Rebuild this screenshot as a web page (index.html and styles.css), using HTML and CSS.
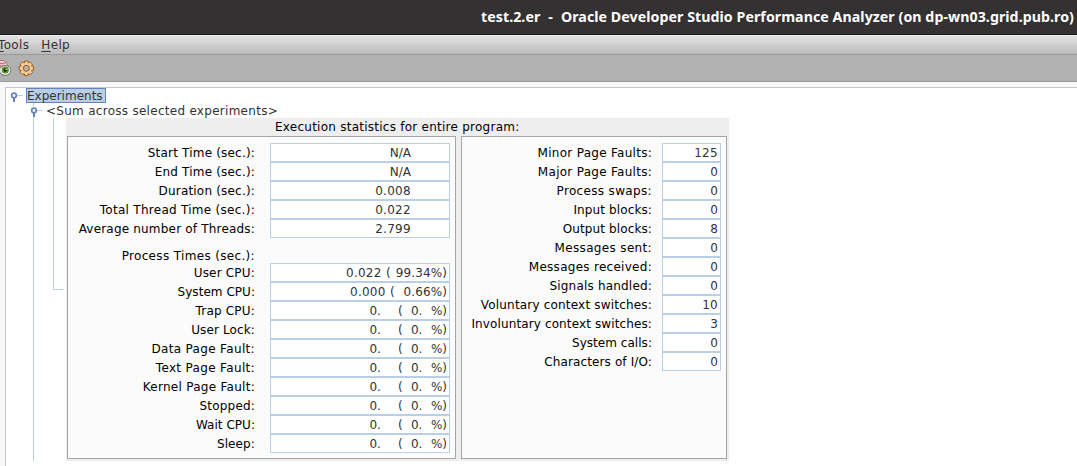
FILE: index.html
```html
<!DOCTYPE html>
<html lang="en">
<head>
<meta charset="utf-8">
<title>test.2.er - Oracle Developer Studio Performance Analyzer</title>
<link rel="stylesheet" href="styles.css">
</head>
<body>
<header class="titlebar"><span class="t1">test.2.er</span><span class="t2">-</span><span class="t3">Oracle Developer Studio Performance Analyzer (on dp-wn03.grid.pub.ro)</span></header>
<nav class="menubar"><span class="m1"><u>T</u>ools</span><span><u>H</u>elp</span></nav>
<div class="toolbar">
<svg class="eye" width="12" height="18" viewBox="0 0 12 18"><path d="M-2 .500h5.500l3.500 3.500v7h-9z" fill="#f5dcde" stroke="#b0666c"/><path d="M0 3.500h5M0 6h6" stroke="#dc6a72" stroke-width="1.300"/><ellipse cx="5.200" cy="10.500" rx="5.700" ry="4.900" fill="#eef1ea" stroke="#68736a"/><circle cx="5.300" cy="10" r="3.600" fill="#5c9422"/><circle cx="5.300" cy="10" r="1.800" fill="#172509"/><circle cx="6.200" cy="9.200" r=".8" fill="#fff"/></svg>
<svg class="gear" width="17" height="17" viewBox="0 0 17 17"><path d="M6.800 1h3l.6 2 1.900-1 2.200 2.200-1 1.900 2 .6v3.200l-2 .6 1 1.900-2.200 2.200-1.900-1-.6 2h-3l-.6-2-1.900 1L2.100 12.400l1-1.900-2-.6V6.700l2-.6-1-1.900L4.300 2l1.900 1z" fill="#f4cd98" stroke="#9c5a1c" stroke-linejoin="round"/><circle cx="8.300" cy="8.300" r="3" fill="#b4b2b0" stroke="#9a551a"/></svg>
</div>
<main class="content">
<svg class="tree" width="62" height="373" viewBox="0 0 62 373"><g fill="none" stroke="#b8cfe5"><path d="M11 7.500h6M31 22.500h6M27.500 15v3M27.500 29v344M47.500 30v171.500h9.500"/></g><g fill="#fff" stroke="#6382bf" stroke-width="1.700"><path d="M8 10v4M28 25v4" stroke-width="2"/><circle cx="8" cy="7.500" r="2.300"/><circle cx="28" cy="22.500" r="2.300"/></g></svg>
<div class="node root"><span>Experiments</span></div>
<div class="node sum"><span>&lt;Sum across selected experiments&gt;</span></div>
<section class="stats">
<h1>Execution statistics for entire program:</h1>
<div class="panels">
<div class="panel left">
<div class="row"><label class="normal">Start Time (sec.):</label><div class="field mid">N/A</div></div>
<div class="row"><label class="normal">End Time (sec.):</label><div class="field mid">N/A</div></div>
<div class="row"><label class="normal">Duration (sec.):</label><div class="field mid num">0.008</div></div>
<div class="row"><label class="loose">Total Thread Time (sec.):</label><div class="field mid num">0.022</div></div>
<div class="row"><label class="normal">Average number of Threads:</label><div class="field mid num">2.799</div></div>
<div class="row heading"><label class="wider">Process Times (sec.):</label></div>
<div class="row"><label class="normal">User CPU:</label><div class="field"><span class="time">0.022</span><span class="open">(</span><span class="pct">99.34%)</span></div></div>
<div class="row"><label class="flat">System CPU:</label><div class="field"><span class="time low">0.000</span><span class="open">(</span><span class="pct small">0.66%)</span></div></div>
<div class="row"><label class="normal">Trap CPU:</label><div class="field"><span>0.</span><span class="far">(</span><span class="zero">0.</span><span>%)</span></div></div>
<div class="row"><label class="tight">User Lock:</label><div class="field"><span>0.</span><span class="far">(</span><span class="zero">0.</span><span>%)</span></div></div>
<div class="row"><label class="wider">Data Page Fault:</label><div class="field"><span>0.</span><span class="far">(</span><span class="zero">0.</span><span>%)</span></div></div>
<div class="row"><label class="wider">Text Page Fault:</label><div class="field"><span>0.</span><span class="far">(</span><span class="zero">0.</span><span>%)</span></div></div>
<div class="row"><label class="loose">Kernel Page Fault:</label><div class="field"><span>0.</span><span class="far">(</span><span class="zero">0.</span><span>%)</span></div></div>
<div class="row"><label class="normal">Stopped:</label><div class="field"><span>0.</span><span class="far">(</span><span class="zero">0.</span><span>%)</span></div></div>
<div class="row"><label class="flat">Wait CPU:</label><div class="field"><span>0.</span><span class="far">(</span><span class="zero">0.</span><span>%)</span></div></div>
<div class="row"><label class="tight">Sleep:</label><div class="field"><span>0.</span><span class="far">(</span><span class="zero">0.</span><span>%)</span></div></div>
</div>
<div class="panel right">
<div class="row"><label class="loose">Minor Page Faults:</label><div class="field num">125</div></div>
<div class="row"><label class="loose">Major Page Faults:</label><div class="field">0</div></div>
<div class="row"><label class="wider">Process swaps:</label><div class="field">0</div></div>
<div class="row"><label class="tight">Input blocks:</label><div class="field">0</div></div>
<div class="row"><label class="tight">Output blocks:</label><div class="field">8</div></div>
<div class="row"><label class="wider">Messages sent:</label><div class="field">0</div></div>
<div class="row"><label class="loose">Messages received:</label><div class="field">0</div></div>
<div class="row"><label class="normal">Signals handled:</label><div class="field">0</div></div>
<div class="row"><label class="normal">Voluntary context switches:</label><div class="field num">10</div></div>
<div class="row"><label class="tight">Involuntary context switches:</label><div class="field">3</div></div>
<div class="row"><label class="flat">System calls:</label><div class="field">0</div></div>
<div class="row"><label class="tight">Characters of I/O:</label><div class="field">0</div></div>
</div>
</div>
</section>
</main>
</body>
</html>
```
FILE: styles.css
```css
* { box-sizing: border-box; }
body { margin: 0; width: 1077px; height: 466px; overflow: hidden; background: #f8f8fa; color: #000; font: 12px/16px "DejaVu Sans", sans-serif; display: flex; flex-direction: column; white-space: nowrap; }
.titlebar { height: 35px; flex: none; background: #343132; border-bottom: 1px solid #1c1a1a; color: #fff; font: bold 14.200px/34px "Noto Sans", sans-serif; letter-spacing: .06px; display: flex; justify-content: flex-end; padding-right: 3px; }
.t2 { margin: 0 8px; }
.menubar { height: 20px; flex: none; background: linear-gradient(#e3e3e3, #bababa); border-bottom: 1px solid #999; border-top: 1px solid #eee; display: flex; gap: 12px; line-height: 18px; color: #333; letter-spacing: .35px; }
.m1 { margin-left: -2px; }
.menubar u { text-underline-offset: 2px; }
.toolbar { height: 27px; flex: none; background: #b1b1b1; border-bottom: 1px solid #999; display: flex; align-items: flex-start; padding-top: 5px; }
.gear { margin-left: 6px; }
.content { position: relative; flex: 1; margin: 5px 0 0 5px; background: #fff; border: solid #c8c8c8; border-width: 1px 0 0 1px; }
.tree { position: absolute; left: 0; top: 0; }
.node { height: 15px; line-height: 16px; color: #333; }
.root { padding-left: 20px; }
.root span { display: inline-block; vertical-align: top; height: 15px; width: 80px; line-height: 14px; background: #b8cfe5; border: 1px solid #6382bf; }
.sum { padding-left: 40px; letter-spacing: .28px; }
.stats { width: 663px; height: 343px; margin-left: 60px; background: #eee; }
.stats h1 { margin: 0; font-size: 12px; font-weight: normal; line-height: 18px; height: 18px; padding-left: 209px; letter-spacing: .25px; }
.panels { display: flex; gap: 5px; padding-left: 1px; }
.panel { height: 323px; background: #fbfbfb; border: 1px solid #a6a6a6; padding-top: 6px; }
.left { width: 389px; }
.right { width: 266px; }
.row { height: 19px; display: grid; line-height: 20px; }
.left .row { grid-template-columns: 187px 180px; column-gap: 15px; }
.right .row { grid-template-columns: 190px 59px; column-gap: 10px; }
.row label { text-align: right; }
.flat { letter-spacing: .04px; }
.tight { letter-spacing: .12px; }
.normal { letter-spacing: .19px; }
.loose { letter-spacing: .28px; }
.wider { letter-spacing: .34px; }
.left .heading { height: 25px; padding-top: 8px; }
.field { height: 19px; background: #fff; border: 1px solid #b8cfe5; color: #333; line-height: 19px; padding-right: 2px; display: flex; justify-content: flex-end; }
.mid { padding-right: 38px; }
.num { letter-spacing: .3px; }
.time { width: 40px; letter-spacing: .25px; }
.low { width: 40px; }
.open { width: 8px; }
.pct { width: 53px; text-align: right; letter-spacing: .1px; }
.small { width: 57px; }
.low + .open { width: 0; }
.far { width: 13px; margin-left: 17px; }
.zero { width: 20px; }
```
